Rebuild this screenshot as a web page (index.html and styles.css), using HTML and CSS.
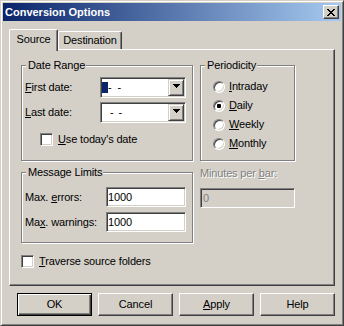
FILE: index.html
```html
<!DOCTYPE html>
<html>
<head>
<meta charset="utf-8">
<link rel="stylesheet" href="styles.css">
</head>
<body>
<div class="window">
  <div class="titlebar">
    <span class="title">Conversion Options</span>
    <div class="close">
      <svg width="8" height="7" viewBox="0 0 8 7" shape-rendering="crispEdges"><path fill="#000" d="M0 0h2v1H0z M6 0h2v1H6z M1 1h2v1H1z M5 1h2v1H5z M2 2h4v1H2z M3 3h2v1H3z M2 4h4v1H2z M1 5h2v1H1z M5 5h2v1H5z M0 6h2v1H0z M6 6h2v1H6z"/></svg>
    </div>
  </div>
  <div class="content">
    <div class="tabs">
      <div class="tab active">Source</div>
      <div class="tab inactive">Destination</div>
    </div>
    <div class="panel">
      <div class="row">
        <div class="group date-range">
          <div class="legend">Date Range</div>
          <div class="dr-row first">
            <span class="lbl dr-lbl"><u>F</u>irst date:</span>
            <div class="combo">
              <div class="combo-text"><span class="sel"></span><span class="d1">-</span><span class="d2">-</span></div>
              <div class="drop"><svg width="7" height="4" viewBox="0 0 7 4" shape-rendering="crispEdges"><path fill="#000" d="M0 0h7v1H0z M1 1h5v1H1z M2 2h3v1H2z M3 3h1v1H3z"/></svg></div>
            </div>
          </div>
          <div class="dr-row second">
            <span class="lbl dr-lbl"><u>L</u>ast date:</span>
            <div class="combo">
              <div class="combo-text pad"><span class="d1">-</span><span class="d2 b">-</span></div>
              <div class="drop"><svg width="7" height="4" viewBox="0 0 7 4" shape-rendering="crispEdges"><path fill="#000" d="M0 0h7v1H0z M1 1h5v1H1z M2 2h3v1H2z M3 3h1v1H3z"/></svg></div>
            </div>
          </div>
          <div class="check today"><span class="box"></span><span><u>U</u>se today's date</span></div>
        </div>
        <div class="group periodicity">
          <div class="legend">Periodicity</div>
          <div class="radios">
            <div class="radio-row"><span class="radio"></span><span><u>I</u>ntraday</span></div>
            <div class="radio-row"><span class="radio"><span class="dot"></span></span><span><u>D</u>aily</span></div>
            <div class="radio-row"><span class="radio"></span><span><u>W</u>eekly</span></div>
            <div class="radio-row"><span class="radio"></span><span><u>M</u>onthly</span></div>
          </div>
        </div>
      </div>
      <div class="row row-mid">
        <div class="group limits">
          <div class="legend">Message Limits</div>
          <div class="lim-row first">
            <span class="lbl lim-lbl">Max. <u>e</u>rrors:</span>
            <div class="input">1000</div>
          </div>
          <div class="lim-row second">
            <span class="lbl lim-lbl">Ma<u>x</u>. warnings:</span>
            <div class="input">1000</div>
          </div>
        </div>
        <div class="minutes">
          <span class="lbl disabled-lbl">Minutes per <u>b</u>ar:</span>
          <div class="input disabled">0</div>
        </div>
      </div>
      <div class="check traverse"><span class="box"></span><span><u>T</u>raverse source folders</span></div>
    </div>
    <div class="buttons">
      <div class="btn default">OK</div>
      <div class="btn">Cancel</div>
      <div class="btn"><span><u>A</u>pply</span></div>
      <div class="btn">Help</div>
    </div>
  </div>
</div>
</body>
</html>
```
FILE: styles.css
```css
* { box-sizing: border-box; }
html, body { margin: 0; padding: 0; background: #d4d0c8; }
body { font-family: "Liberation Sans", Arial, sans-serif; font-size: 11px; line-height: 13px; color: #000; letter-spacing: -0.15px; }

.window {
  width: 344px; height: 326px;
  border: 1px solid; border-color: #d4d0c8 #404040 #404040 #d4d0c8;
  box-shadow: inset 1px 1px #fff, inset -1px -1px #808080;
  padding: 2px; background: #d4d0c8;
  display: flex; flex-direction: column;
}
.titlebar {
  height: 18px; flex: none;
  display: flex; align-items: center; justify-content: space-between;
  padding: 0 2px;
  background: linear-gradient(to right, #0a246a, #a6caf0);
}
.title { color: #fff; font-weight: bold; font-size: 11px; line-height: 18px; letter-spacing: 0; }
.close {
  width: 16px; height: 14px; flex: none;
  border: 1px solid; border-color: #fff #404040 #404040 #fff;
  box-shadow: inset -1px -1px #808080;
  background: #d4d0c8;
}
.close svg { display: block; margin: 3px 0 0 3px; }

.content { flex: 1; display: flex; flex-direction: column; padding: 8px 6px 0; }
.tabs { height: 20px; flex: none; display: flex; align-items: flex-end; }
.tab {
  border-top: 1px solid #fff; border-left: 1px solid #fff; border-right: 1px solid #404040;
  box-shadow: inset -1px 0 #808080;
  border-radius: 2px 2px 0 0;
  text-align: center; background: #d4d0c8;
}
.tab.active { width: 49px; height: 22px; margin-bottom: -2px; line-height: 18px; position: relative; z-index: 1; }
.tab.inactive { width: 64px; height: 18px; line-height: 17px; }

.panel {
  height: 237px; flex: none;
  border: 1px solid; border-color: #fff #404040 #404040 #fff;
  box-shadow: inset -1px -1px #808080;
  padding: 15px 0 0 11px;
  display: flex; flex-direction: column;
}
.row { display: flex; gap: 7px; align-items: flex-start; }
.row-mid { margin-top: 11px; }
.group {
  border: 1px solid #808080;
  box-shadow: inset 1px 1px #fff, 1px 1px #fff;
  display: flex; flex-direction: column; flex: none;
}
.legend {
  align-self: flex-start;
  margin: -7px 0 0 4px; padding: 0 1px 0 2px;
  background: #d4d0c8; line-height: 13px;
}
.date-range { width: 172px; height: 96px; }
.periodicity { width: 95px; height: 96px; }
.limits { width: 172px; height: 71px; }

.dr-row { display: flex; align-items: center; height: 21px; padding-left: 3px; }
.dr-row.first { margin-top: 5px; }
.dr-row.second { margin-top: 4px; }
.dr-lbl { width: 75px; flex: none; }

.combo {
  width: 86px; height: 21px; flex: none;
  border: 1px solid; border-color: #808080 #fff #fff #808080;
  box-shadow: inset 1px 1px #404040, inset -1px -1px #d4d0c8;
  padding: 1px; display: flex; background: #fff;
}
.combo-text { flex: 1; display: flex; align-items: center; }
.combo-text.pad { padding-left: 8px; }
.sel { width: 6px; height: 11px; background: #0a246a; flex: none; }
.d2 { margin-left: 6px; }
.d2.b { margin-left: 5px; }
.drop {
  width: 16px; height: 17px; flex: none;
  border: 1px solid; border-color: #d4d0c8 #404040 #404040 #d4d0c8;
  box-shadow: inset 1px 1px #fff, inset -1px -1px #808080;
  background: #d4d0c8;
  display: flex; justify-content: center; align-items: flex-start; padding-top: 4px;
}
.drop svg { display: block; }

.check { display: flex; align-items: center; height: 13px; }
.box {
  width: 13px; height: 13px; flex: none; margin-right: 5px;
  border: 1px solid; border-color: #808080 #fff #fff #808080;
  box-shadow: inset 1px 1px #404040, inset -1px -1px #d4d0c8;
  background: #fff;
}
.today { margin: 10px 0 0 18px; }
.traverse { margin-top: 12px; }

.radios { margin-top: 5px; padding-left: 12px; display: flex; flex-direction: column; }
.radio-row { height: 19px; display: flex; align-items: center; }
.radio {
  width: 12px; height: 12px; flex: none; margin-right: 4px;
  border-radius: 50%;
  border: 1px solid; border-color: #808080 #fff #fff #808080;
  box-shadow: inset 1px 1px #404040, inset -1px -1px #d4d0c8;
  background: #fff;
  display: flex; align-items: center; justify-content: center;
}
.dot { width: 4px; height: 4px; background: #000; border-radius: 1px; }

.lim-row { display: flex; align-items: center; height: 20px; padding-left: 3px; }
.lim-row.first { margin-top: 8px; }
.lim-row.second { margin-top: 5px; }
.lim-lbl { width: 81px; flex: none; }
.input {
  width: 80px; height: 20px; flex: none;
  border: 1px solid; border-color: #808080 #fff #fff #808080;
  box-shadow: inset 1px 1px #404040, inset -1px -1px #d4d0c8;
  background: #fff; padding: 0 0 0 1px; line-height: 18px;
}
.minutes { margin-top: -5px; display: flex; flex-direction: column; }
.disabled-lbl { color: #808080; text-shadow: 1px 1px #fff; }
.input.disabled { width: 95px; margin-top: 8px; background: #d4d0c8; color: #808080; padding-left: 2px; }

.buttons { display: flex; justify-content: flex-end; gap: 6px; margin-top: 7px; flex: none; }
.btn {
  width: 75px; height: 23px;
  border: 1px solid; border-color: #fff #404040 #404040 #fff;
  box-shadow: inset -1px -1px #808080;
  display: flex; align-items: center; justify-content: center;
}
.btn.default {
  border-color: #000;
  box-shadow: inset 1px 1px #fff, inset -1px -1px #404040, inset -2px -2px #808080;
}
```
